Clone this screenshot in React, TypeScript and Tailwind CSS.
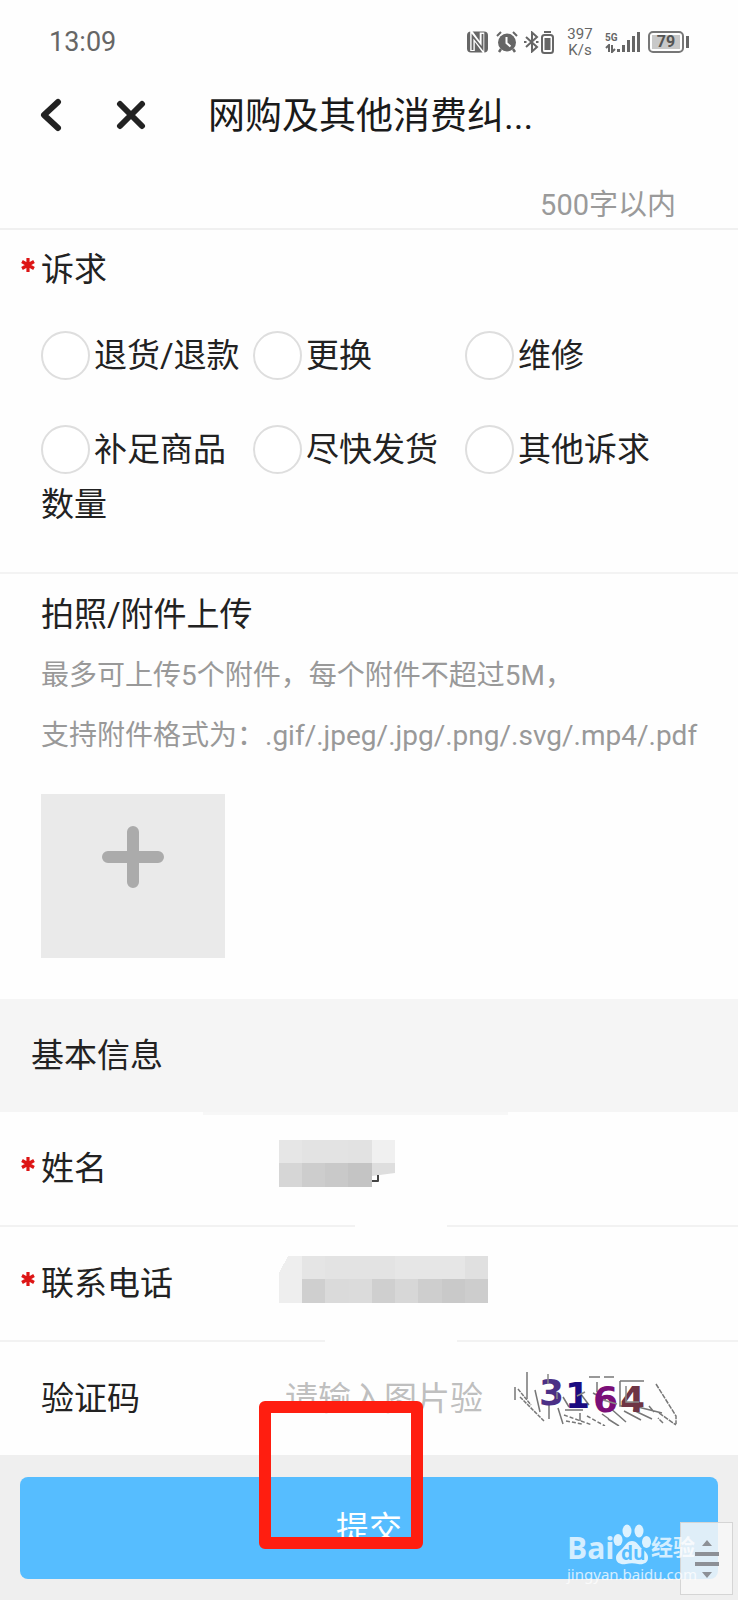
import React from 'react'

const DEMANDS = ['退货/退款', '更换', '维修', '补足商品数量', '尽快发货', '其他诉求']

function StatusBar() {
    return (
        <div className="flex h-[84px] items-center justify-between pl-[49px] pr-[49px] text-[#666]">
            <span className="text-[27px] leading-8">13:09</span>
            <div className="flex items-center">
                <svg className="mr-2 h-[22px] w-[21px]" viewBox="0 0 21 22" fill="none">
                    <rect x="0" y="0.5" width="21" height="21" rx="4" fill="#666" />
                    <path d="M5.5 20V4L15 17V1.5" stroke="#fff" strokeWidth="4.6" />
                    <path d="M5.5 19V5L15.5 17.5V3" stroke="#666" strokeWidth="1.8" />
                </svg>
                <svg className="mr-[6px] h-[22px] w-[22px]" viewBox="0 0 22 22" fill="none">
                    <circle cx="11" cy="11.5" r="9" fill="#666" />
                    <path d="M1 5l4-4M21 5l-4-4" stroke="#666" strokeWidth="2" />
                    <path d="M5 18l-2 3M17 18l2 3" stroke="#666" strokeWidth="2.5" />
                    <path d="M10.5 6v6l4 3.5" stroke="#fff" strokeWidth="2" />
                </svg>
                <svg className="mr-[2px] h-[22px] w-[15px]" viewBox="0 0 15 22" fill="none" stroke="#666" strokeWidth="2">
                    <path d="M2 6l11 10-5 4.5V1.5L13 6 2 16" />
                    <path d="M0 11h2.5M12 11h2.5" />
                </svg>
                <svg className="mr-[12px] h-[23px] w-[13px]" viewBox="0 0 13 23" fill="none">
                    <path d="M3 1h7" stroke="#666" strokeWidth="2" />
                    <rect x="1" y="4" width="11" height="18" rx="2.5" stroke="#666" strokeWidth="2" />
                    <rect x="3.5" y="7" width="6" height="12" fill="#666" />
                </svg>
                <div className="mr-[11px] flex w-[28px] flex-col text-center text-[15px] leading-4">
                    <span>397</span>
                    <span>K/s</span>
                </div>
                <div className="mr-[8px] flex items-end">
                    <div className="flex w-[12px] flex-col">
                        <span className="text-[10px] font-bold leading-[12px]">5G</span>
                        <svg className="h-[9px] w-[12px]" viewBox="0 0 12 9" fill="none" stroke="#666" strokeWidth="2">
                            <path d="M1 4l3-3v7M7 1v7l3-3" />
                        </svg>
                    </div>
                    <svg className="h-[22px] w-[23px]" viewBox="0 0 23 22" fill="#666">
                        <rect x="0" y="18" width="3" height="3" />
                        <rect x="5" y="14" width="3" height="7" />
                        <rect x="10" y="9" width="3" height="12" />
                        <rect x="15" y="5" width="3" height="16" />
                        <rect x="20" y="1" width="3" height="20" />
                    </svg>
                </div>
                <div className="flex h-[22px] w-[36px] items-center justify-center rounded-[5px] border-2 border-[#777] p-[2px]">
                    <span className="w-full bg-[#c8c8c8] text-center text-[16px] font-bold leading-[14px] text-[#555]">79</span>
                </div>
                <div className="ml-[2px] h-[12px] w-[3px] bg-[#666]" />
            </div>
        </div>
    )
}

function TitleBar() {
    return (
        <header className="flex h-[62px] items-center">
            <button type="button" aria-label="返回" className="ml-[39px] w-[24px]">
                <svg className="h-[34px] w-[24px]" viewBox="0 0 24 34" fill="none">
                    <path d="M19 4L5 17l14 13" stroke="#222" strokeWidth="6" strokeLinecap="round" strokeLinejoin="round" />
                </svg>
            </button>
            <button type="button" aria-label="关闭" className="ml-[53px] w-[30px]">
                <svg className="h-[30px] w-[30px]" viewBox="0 0 30 30" fill="none">
                    <path d="M4 4l22 22M26 4L4 26" stroke="#222" strokeWidth="6" strokeLinecap="round" />
                </svg>
            </button>
            <h1 className="ml-[62px] pt-1 text-[37px] leading-[54px] text-[#1a1a1a]">网购及其他消费纠...</h1>
        </header>
    )
}

function Required() {
    return (
        <svg className="mb-[10px] ml-px h-[14px] w-[14px] shrink-0" viewBox="0 0 14 14" stroke="#dd1515" strokeWidth="3.2">
            <path d="M7 0v14M1 3.5l12 7M13 3.5l-12 7" />
        </svg>
    )
}

interface FieldRowProps {
    id: string
    label: string
    required?: boolean
    children: React.ReactNode
}

function FieldRow({ id, label, required, children }: FieldRowProps) {
    return (
        <div className="flex h-[113px] items-center">
            <div className="flex w-[279px] shrink-0 items-center pl-[20px]">
                <span className="flex w-[21px] shrink-0">{required && <Required />}</span>
                <label htmlFor={id}>{label}</label>
            </div>
            {children}
        </div>
    )
}

// Divider with a blank stretch in the middle
function BrokenLine({ left, gap }: { left: string; gap: string }) {
    return (
        <div className="flex h-[2px]">
            <div className={`${left} bg-[#f2f2f2]`} />
            <div className={gap} />
            <div className="flex-1 bg-[#f2f2f2]" />
        </div>
    )
}

const NAME_TOP = ['#e6e6e6', '#e3e3e3', '#e3e3e3', '#e2e2e2']
const NAME_BOTTOM = ['#d6d6d6', '#cdcdcd', '#c9c9c9', '#c4c4c4']
const PHONE_TOP = ['#e5e5e5', '#e3e3e3', '#e3e3e3', '#e3e3e3', '#e6e6e6', '#e6e6e6', '#e6e6e6', '#e0e0e0']
const PHONE_BOTTOM = ['#cfcfcf', '#dadada', '#dbdbdb', '#cfcfcf', '#d7d7d7', '#cecece', '#c9c9c9', '#cdcdcd']

function NameMosaic() {
    return (
        <svg className="mb-[10px] h-[47px] w-[117px]" viewBox="0 0 117 47">
            {NAME_TOP.map((c, i) => (
                <rect key={i} x={i * 23} y="0" width="24" height="24" fill={c} />
            ))}
            {NAME_BOTTOM.map((c, i) => (
                <rect key={i} x={i * 23} y="23" width="24" height="24" fill={c} />
            ))}
            <rect x="93" y="0" width="23" height="23" fill="#f0f0f0" />
            <path d="M93 23h23v10l-23 3z" fill="#dedede" />
            <path d="M93 41h6v-6" fill="none" stroke="#444" strokeWidth="2" strokeLinejoin="round" />
        </svg>
    )
}

function PhoneMosaic() {
    return (
        <svg className="mb-2 h-[47px] w-[209px]" viewBox="0 0 209 47" shapeRendering="crispEdges">
            <path d="M9 0h14v47H0V17z" fill="#eee" />
            {PHONE_TOP.map((c, i) => (
                <rect key={i} x={23 + i * 23.25} y="0" width="23.25" height="24" fill={c} />
            ))}
            {PHONE_BOTTOM.map((c, i) => (
                <rect key={i} x={23 + i * 23.25} y="23" width="23.25" height="24" fill={c} />
            ))}
        </svg>
    )
}

function Captcha() {
    return (
        <svg className="h-[54px] w-[164px]" viewBox="0 0 164 54" fill="none">
            <g stroke="#777" strokeWidth="1.5">
                <path d="M2 15v13M14 0v27M22 18l5 22M36 33v14" />
                <path d="M5 17l13 16M7 25l24 24" strokeDasharray="4 1" />
                <path d="M45 36l5 16M50 25l6 10M67 21l9 12M52 38h18M67 41v8" />
                <path d="M51 43l28 10M53 49l16 3M74 44l18 10" strokeDasharray="4 2" />
                <path d="M76 5h11M91 5h10M84 10v10M80 21l13 7M96 35l17 15M95 47l11 7M89 42l7 5" />
                <path d="M107 9h24M107 9v25h8M120 38l19 9M125 35l24 6M111 39l17 9M136 34l5 6" />
                <path d="M143 12l20 32v8M146 41l17 12M150 51l-5-5" strokeDasharray="5 1" />
            </g>
            <g fontFamily="DejaVu Sans" fontWeight="700" fontSize="36" strokeWidth="1">
                <text x="26" y="33" fill="#4b2f86">3</text>
                <text x="52" y="36" fill="#1a0b80">1</text>
                <text x="80" y="40" fill="#7a0f78">6</text>
                <text x="107" y="40" fill="#6e3444">4</text>
            </g>
            <path d="M35 2v10M44 20v7M64 24l8-4M90 28l14 4M113 14v16h13" stroke="#888" strokeWidth="1.5" />
        </svg>
    )
}

function Watermark() {
    return (
        <div className="pointer-events-none absolute bottom-[17px] right-[39px] w-[132px] text-white/75">
            <div className="flex h-[42px] items-end">
                <span className="w-[46px] font-['Open_Sans'] text-[30px] font-bold leading-[34px]">Bai</span>
                <svg className="h-[42px] w-[38px] shrink-0" viewBox="0 0 38 42" fill="#fff" fillOpacity="0.8">
                    <ellipse cx="5" cy="17" rx="4.5" ry="6" />
                    <ellipse cx="14" cy="8" rx="4.5" ry="6.5" />
                    <ellipse cx="26" cy="8" rx="4.5" ry="6.5" />
                    <ellipse cx="33.5" cy="19" rx="4.5" ry="6" />
                    <path d="M19 18c5 0 7 5 10 8 4 3 6 5 6 9 0 5-5 7-10 6-4-1-8-1-12 0-5 1-10-1-10-6 0-4 3-6 6-9s5-8 10-8z" />
                    <text x="8" y="37" fill="#56bdff" fillOpacity="1" fontFamily="Open Sans" fontWeight="700" fontSize="19">
                        du
                    </text>
                </svg>
                <span className="whitespace-nowrap text-[22px] font-bold leading-[34px]">经验</span>
            </div>
            <p className="font-['Noto_Sans'] text-[15px] leading-[18px]">jingyan.baidu.com</p>
        </div>
    )
}

export default function App() {
    const [demands, setDemands] = React.useState<string[]>([])

    const toggle = (name: string) => {
        setDemands(demands.includes(name) ? demands.filter((d) => d !== name) : [...demands, name])
    }

    return (
        <div className="min-h-screen overflow-hidden bg-[#efefef] font-['Roboto','Noto_Sans_CJK_SC',sans-serif] text-[33px] leading-[55px] text-[#222]">
            <div className="bg-[#fefefe]">
                <StatusBar />
                <TitleBar />

                <p className="border-b-2 border-[#f0f0f0] pb-[2px] pr-[62px] pt-[39px] text-right text-[29px] leading-[41px] text-[#9a9a9a]">
                    500字以内
                </p>

                <section className="border-b-2 border-[#f3f3f3] pb-px">
                    <h2 className="mb-[31px] flex items-center pl-[20px] pt-[12px]">
                        <span className="flex w-[21px]">
                            <Required />
                        </span>
                        诉求
                    </h2>
                    <div className="grid grid-cols-3 pl-[41px] pr-[61px]">
                        {DEMANDS.map((name) => (
                            <label key={name} className="mb-[39px] block">
                                <input
                                    type="checkbox"
                                    checked={demands.includes(name)}
                                    onChange={() => toggle(name)}
                                    className="mr-1 mt-[3px] inline-block h-[49px] w-[49px] appearance-none rounded-full border-2 border-[#dedede] bg-white align-top checked:bg-[#56bdff]"
                                />
                                {name}
                            </label>
                        ))}
                    </div>
                </section>

                <section className="px-[41px] pb-[41px] pt-[13px]">
                    <h2>拍照/附件上传</h2>
                    <p className="mt-1 text-[28px] leading-[60px] text-[#999]">
                        最多可上传5个附件，每个附件不超过5M，
                        <br />
                        <span className="whitespace-nowrap">支持附件格式为：.gif/.jpeg/.jpg/.png/.svg/.mp4/.pdf</span>
                    </p>
                    <button
                        type="button"
                        aria-label="上传附件"
                        className="mt-[28px] flex h-[164px] w-[184px] items-start justify-center bg-[#eaeaea] pt-[32px]"
                    >
                        <svg className="h-[62px] w-[62px]" viewBox="0 0 62 62" stroke="#ababab" strokeWidth="12" strokeLinecap="round">
                            <path d="M31 6v50M6 31h50" />
                        </svg>
                    </button>
                </section>
            </div>

            <h2 className="bg-[#f5f5f5] pb-[29px] pl-[31px] pt-[29px]">基本信息</h2>

            <div className="bg-[#fefefe]">
                <div className="-mb-[3px] ml-[203px] h-[3px] w-[305px] bg-[#f7f7f7]" />
                <FieldRow id="name" label="姓名" required>
                    <button id="name" type="button" aria-label="姓名">
                        <NameMosaic />
                    </button>
                </FieldRow>
                <BrokenLine left="w-[355px]" gap="w-[92px]" />
                <FieldRow id="phone" label="联系电话" required>
                    <button id="phone" type="button" aria-label="联系电话">
                        <PhoneMosaic />
                    </button>
                </FieldRow>
                <BrokenLine left="w-[325px]" gap="w-[132px]" />
                <FieldRow id="captcha" label="验证码">
                    <input
                        id="captcha"
                        type="text"
                        placeholder="请输入图片验证码"
                        className="ml-[6px] w-[198px] shrink-0 bg-transparent outline-none placeholder:text-[#bfbfbf]"
                    />
                    <button type="button" aria-label="刷新验证码" className="ml-[30px]">
                        <Captcha />
                    </button>
                </FieldRow>
            </div>

            <footer className="relative px-[20px] pb-[21px] pt-[22px]">
                <button type="submit" className="h-[102px] w-full rounded-[8px] bg-[#56bdff] text-white">
                    提交
                </button>
                <div className="pointer-events-none absolute -top-[54px] left-[259px] h-[148px] w-[164px] rounded-[6px] border-[12px] border-[#ff1e10]" />
                <button
                    type="button"
                    aria-label="滚动"
                    className="absolute bottom-[5px] right-[5px] flex h-[73px] w-[53px] items-center justify-center border border-[#d5d5d5] bg-[#f7f7f7]/85"
                >
                    <svg className="h-[38px] w-[24px]" viewBox="0 0 24 38" fill="#8d9096">
                        <path d="M12 0l5 6H7zM12 38l5-6H7zM0 12h24v4H0zM0 22h24v4H0z" />
                    </svg>
                </button>
                <Watermark />
            </footer>
        </div>
    )
}
